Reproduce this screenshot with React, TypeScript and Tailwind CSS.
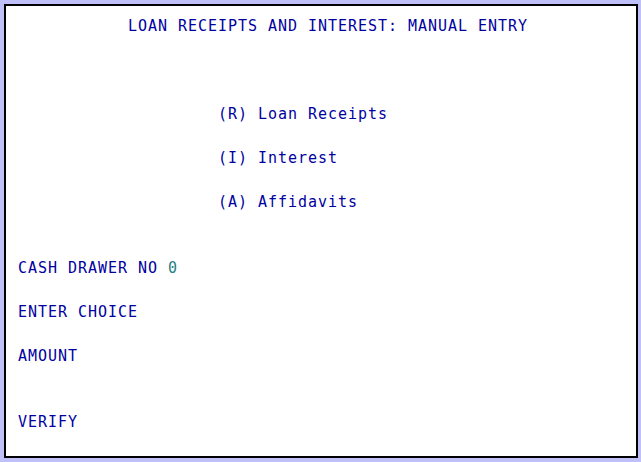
import React from "react";

type Seg = { t: string; c?: string };

const lines: Seg[][] = [
  [{ t: "           LOAN RECEIPTS AND INTEREST: MANUAL ENTRY" }],
  [],
  [],
  [],
  [{ t: "                    (R) Loan Receipts" }],
  [],
  [{ t: "                    (I) Interest" }],
  [],
  [{ t: "                    (A) Affidavits" }],
  [],
  [],
  [{ t: "CASH DRAWER NO " }, { t: "0", c: "text-[#1f8080]" }],
  [],
  [{ t: "ENTER CHOICE" }],
  [],
  [{ t: "AMOUNT" }],
  [],
  [],
  [{ t: "VERIFY" }],
];

export default function App() {
  return (
    <div className="w-[641px] h-[462px] bg-[#c0c0f8] pt-[4px] pl-[4px] pr-[3px] pb-[4px]">
      <div className="h-full border-2 border-black bg-white pt-[9px] pl-[12px]">
        <div
          className="text-[15px] tracking-[0.97px] text-[#0000a0] whitespace-pre"
          style={{ fontFamily: '"DejaVu Sans Mono", "Liberation Mono", monospace' }}
        >
          {lines.map((segs, i) => (
            <div key={i} className="h-[22px] leading-[22px]">
              {segs.length === 0
                ? "\u00a0"
                : segs.map((s, j) => (
                    <span key={j} className={s.c}>
                      {s.t}
                    </span>
                  ))}
            </div>
          ))}
        </div>
      </div>
    </div>
  );
}
